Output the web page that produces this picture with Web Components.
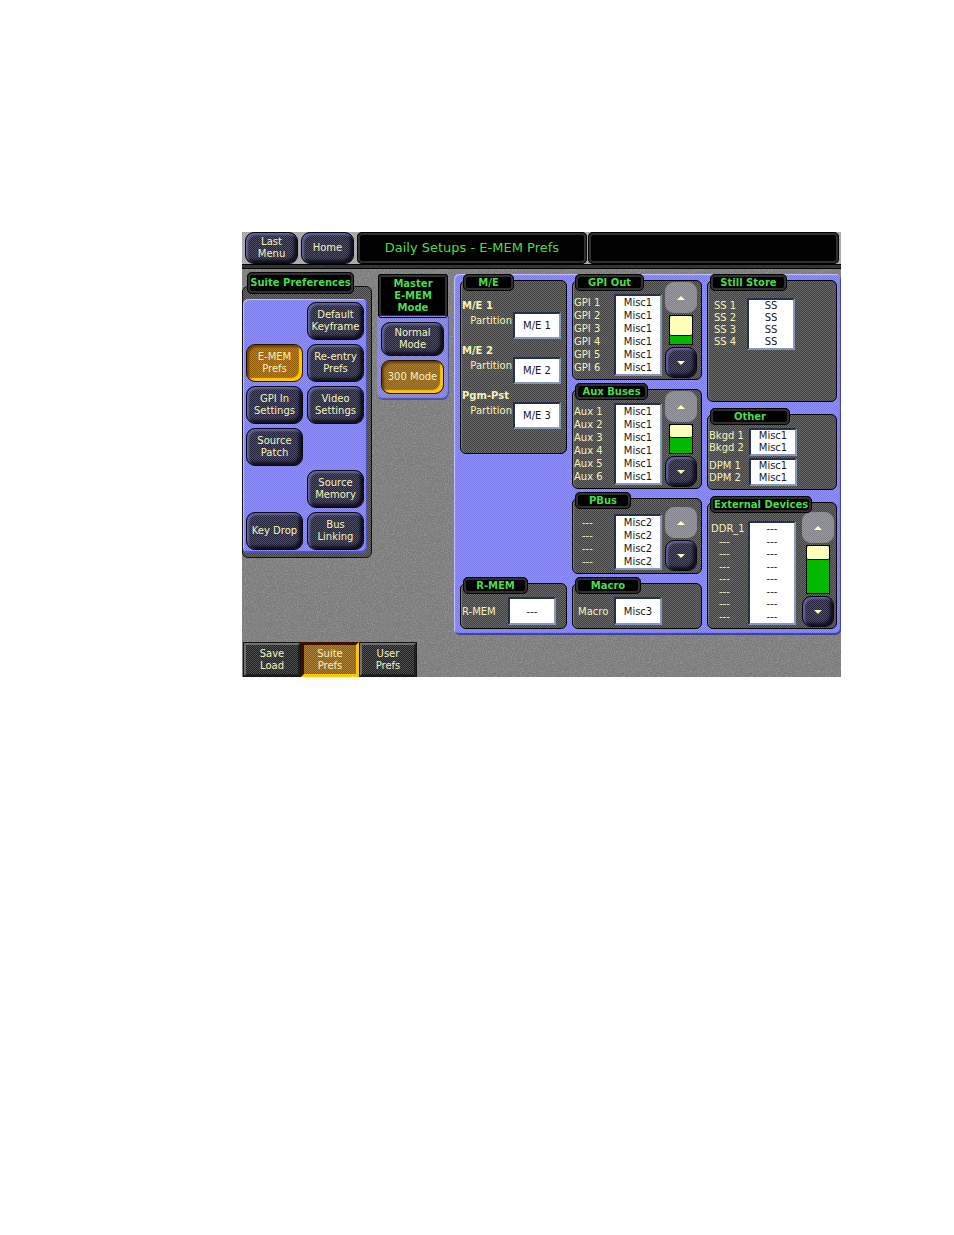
<!DOCTYPE html>
<html lang="en">
  <head>
    <meta charset="UTF-8" />
    <meta name="viewport" content="width=device-width, initial-scale=1.0" />
    <title>Daily Setups - E-MEM Prefs</title>

    <style>
      :root {
        --grain: url("data:image/svg+xml,%3Csvg xmlns='http://www.w3.org/2000/svg' width='128' height='128'%3E%3Cfilter id='n'%3E%3CfeTurbulence type='fractalNoise' baseFrequency='.9' numOctaves='2' stitchTiles='stitch'/%3E%3CfeColorMatrix values='0 0 0 0 .3 0 0 0 0 .3 0 0 0 0 .3 3 0 0 0 -1.3'/%3E%3C/filter%3E%3Crect width='128' height='128' filter='url(%23n)'/%3E%3C/svg%3E");
        --dither: repeating-conic-gradient(#ffffff38 0 25%, #0000 0 50%) 0 0 / 2px 2px;
        --blue: #7878e6;
        --grey: #404040;
        --cream: #f4f2bc;
        --green: #4bdc4b;
      }

      body {
        margin: 0;
        padding: 232px 113px 40px 242px;
        background: #fff;
        font: 10px/12px "DejaVu Sans", Verdana, sans-serif;
      }
    </style>
  </head>
  <body>
    <switcher-screen>
      <panel-button slot="header">Last<br />Menu</panel-button>
      <panel-button slot="header">Home</panel-button>
      <display-bar slot="header">Daily Setups - E-MEM Prefs</display-bar>
      <display-bar slot="header" wide></display-bar>

      <suite-panel heading="Suite Preferences">
        <panel-button style="grid-area: 1 / 2">Default<br />Keyframe</panel-button>
        <panel-button style="grid-area: 2 / 1" active>E-MEM<br />Prefs</panel-button>
        <panel-button style="grid-area: 2 / 2">Re-entry<br />Prefs</panel-button>
        <panel-button style="grid-area: 3 / 1">GPI In<br />Settings</panel-button>
        <panel-button style="grid-area: 3 / 2">Video<br />Settings</panel-button>
        <panel-button style="grid-area: 4 / 1">Source<br />Patch</panel-button>
        <panel-button style="grid-area: 5 / 2">Source<br />Memory</panel-button>
        <panel-button style="grid-area: 6 / 1">Key Drop</panel-button>
        <panel-button style="grid-area: 6 / 2">Bus<br />Linking</panel-button>
      </suite-panel>

      <mode-panel>
        <span slot="heading">Master<br />E-MEM<br />Mode</span>
        <panel-button>Normal<br />Mode</panel-button>
        <panel-button active>300 Mode</panel-button>
      </mode-panel>

      <prefs-board>
        <group-box slot="first" heading="M/E" title-width="51" class="me">
          <partition-row heading="M/E 1" value="M/E 1"></partition-row>
          <partition-row heading="M/E 2" value="M/E 2"></partition-row>
          <partition-row heading="Pgm-Pst" value="M/E 3"></partition-row>
        </group-box>
        <group-box slot="first" heading="R-MEM" title-width="65" class="rmem">
          <pad-list labels="R-MEM" values="---" single></pad-list>
        </group-box>

        <group-box slot="second" heading="GPI Out" title-width="69">
          <pad-list labels="GPI 1,GPI 2,GPI 3,GPI 4,GPI 5,GPI 6" values="Misc1,Misc1,Misc1,Misc1,Misc1,Misc1"></pad-list>
          <scroll-keys slot="side" thumb="70"></scroll-keys>
        </group-box>
        <group-box slot="second" heading="Aux Buses" title-width="73">
          <pad-list labels="Aux 1,Aux 2,Aux 3,Aux 4,Aux 5,Aux 6" values="Misc1,Misc1,Misc1,Misc1,Misc1,Misc1"></pad-list>
          <scroll-keys slot="side" thumb="45"></scroll-keys>
        </group-box>
        <group-box slot="second" heading="PBus" title-width="56" class="pbus">
          <pad-list labels="---,---,---,---" values="Misc2,Misc2,Misc2,Misc2" indent></pad-list>
          <scroll-keys slot="side"></scroll-keys>
        </group-box>
        <group-box slot="second" heading="Macro" title-width="66" class="macro">
          <pad-list labels="Macro" values="Misc3" single></pad-list>
        </group-box>

        <group-box slot="third" heading="Still Store" title-width="77" class="still">
          <pad-list labels="SS 1,SS 2,SS 3,SS 4" values="SS,SS,SS,SS" compact></pad-list>
        </group-box>
        <group-box slot="third" heading="Other" title-width="80">
          <pad-list labels="Bkgd 1,Bkgd 2" values="Misc1,Misc1" compact></pad-list>
          <pad-list labels="DPM 1,DPM 2" values="Misc1,Misc1" compact></pad-list>
        </group-box>
        <group-box slot="third" heading="External Devices" title-width="102" class="external">
          <pad-list labels="DDR_1,---,---,---,---,---,---,---" values="---,---,---,---,---,---,---,---" tall></pad-list>
          <scroll-keys slot="side" thumb="30"></scroll-keys>
        </group-box>
      </prefs-board>

      <panel-tab slot="footer">Save<br />Load</panel-tab>
      <panel-tab slot="footer" active>Suite<br />Prefs</panel-tab>
      <panel-tab slot="footer">User<br />Prefs</panel-tab>
    </switcher-screen>

    <script>
      "use strict";

      // Registers an element whose shadow markup may depend on its attributes
      function define(name, markup) {
        customElements.define(
          name,
          class extends HTMLElement {
            constructor() {
              super();
              this.attachShadow({ mode: "open" }).innerHTML = markup(this);
            }
          }
        );
      }

      const headingStyle = `
        h2 {
          box-sizing: border-box;
          margin: 0;
          border: 3px solid #303030;
          border-radius: 5px;
          outline: 1px solid #000;
          outline-offset: -1px;
          background: #000;
          color: var(--green);
          font-size: 10px;
          font-weight: bold;
          text-align: center;
          white-space: nowrap;
        }
      `;

      define("switcher-screen", () => `
        <style>
          :host {
            display: block;
            background: var(--grain), #7c7c7c;
          }
          header {
            display: flex;
            gap: 3px;
            padding: 0 2px 1px 3px;
            background: var(--dither), #a0a0a0;
            border-bottom: 3px solid #343434;
            box-shadow: 0 1px #000, inset 0 -1px #000;
          }
          header ::slotted(panel-button) {
            flex: 0 0 53px;
            --key-height: 32px;
          }
          main {
            display: flex;
            align-items: flex-start;
            gap: 5px;
            padding-top: 5px;
          }
          footer {
            display: flex;
            padding: 7px 0 0 1px;
          }
        </style>
        <header><slot name="header"></slot></header>
        <main><slot></slot></main>
        <footer><slot name="footer"></slot></footer>
      `);

      define("panel-button", el => `
        <style>
          :host {
            display: block;
          }
          button {
            display: block;
            box-sizing: border-box;
            width: 100%;
            height: var(--key-height, 38px);
            padding: 0;
            border: 1px solid #080814;
            border-radius: 9px;
            background: var(--dither), #20203a;
            box-shadow: inset 2px 2px 2px #6464a0, inset -3px -3px 3px #10101e;
            color: var(--cream);
            font: inherit;
            text-align: center;
          }
          button.active {
            border-color: #201400;
            background: var(--dither), #945c00;
            box-shadow: inset 2px 2px 2px #6c4000, inset -3px -3px 1px #ffc800;
          }
        </style>
        <button type="button" class="${el.hasAttribute("active") ? "active" : ""}"><slot></slot></button>
      `);

      define("display-bar", el => `
        <style>
          :host {
            display: block;
            box-sizing: border-box;
            flex: ${el.hasAttribute("wide") ? 252 : 230} 1 0;
            margin-left: ${el.hasAttribute("wide") ? "-2px" : "0"};
            height: 32px;
            border: 3px solid #303030;
            border-radius: 5px;
            outline: 1px solid #000;
            outline-offset: -1px;
            background: #000;
            color: var(--green);
            font-size: 13px;
            line-height: 26px;
            text-align: center;
            white-space: nowrap;
          }
        </style>
        <slot></slot>
      `);

      define("suite-panel", el => `
        <style>
          :host {
            display: block;
            flex: 0 0 130px;
            margin-top: -1px;
          }
          ${headingStyle}
          h2 {
            position: relative;
            width: 107px;
            height: 22px;
            margin-left: 5px;
            line-height: 16px;
          }
          .frame {
            margin-top: -8px;
            padding: 12px 4px 4px 0;
            border: 1px solid #101010;
            border-radius: 6px;
            background: var(--dither), var(--grey);
          }
          .keys {
            display: grid;
            grid-template-columns: 1fr 1fr;
            grid-auto-rows: 38px;
            gap: 4px;
            padding: 3px;
            border-radius: 5px;
            background: var(--dither), var(--blue);
            box-shadow: inset 1px 1px 1px #c4c4ff, inset -1px -2px 1px #5050a8;
          }
        </style>
        <h2>${el.getAttribute("heading")}</h2>
        <div class="frame"><div class="keys"><slot></slot></div></div>
      `);

      define("mode-panel", () => `
        <style>
          :host {
            display: block;
            flex: 0 0 72px;
            margin-top: 1px;
          }
          ${headingStyle}
          h2 {
            height: 44px;
            margin: 0 1px;
            border-radius: 3px;
            padding-top: 1px;
          }
          .keys {
            display: grid;
            gap: 4px;
            margin-top: -2px;
            padding: 6px 5px 6px 4px;
            border-radius: 0 0 6px 6px;
            background: var(--dither), var(--blue);
            box-shadow: inset -1px -2px 1px #5050a8;
            --key-height: 34px;
          }
        </style>
        <h2><slot name="heading"></slot></h2>
        <div class="keys"><slot></slot></div>
      `);

      define("prefs-board", () => `
        <style>
          :host {
            display: grid;
            flex: 1;
            grid-template-columns: 107fr 130fr 130fr;
            column-gap: 5px;
            margin-top: 1px;
            padding: 0 4px 6px 6px;
            border-radius: 5px;
            background: var(--dither), var(--blue);
            box-shadow: inset 1px 1px 1px #c4c4ff, inset -1px -2px 1px #404090;
          }
          div {
            display: flex;
            flex-direction: column;
            justify-content: space-between;
            gap: 3px;
            min-width: 0;
          }
          ::slotted(.me) {
            --body-height: 174px;
            --content-top: 15px;
          }
          ::slotted(.still) {
            --body-height: 122px;
            --content-top: 17px;
            --indent: 6px;
            --label-width: 33px;
          }
          ::slotted(.rmem) {
            --label-width: 46px;
          }
          ::slotted(.macro) {
            --indent: 5px;
            --label-width: 36px;
          }
          ::slotted(.pbus) {
            --content-top: 15px;
            --keys-top: 8px;
          }
          ::slotted(.external) {
            --body-height: 127px;
            --content-top: 18px;
            --keys-top: 9px;
            --keys-right: 2px;
            --indent: 3px;
            --label-width: 37px;
          }
        </style>
        <div><slot name="first"></slot></div>
        <div><slot name="second"></slot></div>
        <div><slot name="third"></slot></div>
      `);

      define("group-box", el => `
        <style>
          :host {
            display: block;
          }
          ${headingStyle}
          h2 {
            position: relative;
            width: ${el.getAttribute("title-width")}px;
            height: 17px;
            margin-left: 3px;
            line-height: 11px;
          }
          .body {
            box-sizing: border-box;
            display: flex;
            justify-content: space-between;
            min-height: var(--body-height, 0);
            margin-top: -11px;
            border: 1px solid #000;
            border-radius: 6px;
            background: var(--dither), var(--grey);
            box-shadow: inset 1px 0 #787878;
          }
          .content {
            display: grid;
            align-content: start;
            gap: 2px;
            padding: var(--content-top, 13px) 0 3px var(--indent, 1px);
          }
        </style>
        <h2>${el.getAttribute("heading")}</h2>
        <div class="body">
          <div class="content"><slot></slot></div>
          <slot name="side"></slot>
        </div>
      `);

      const padStyle = `
        button {
          display: grid;
          box-sizing: border-box;
          align-content: space-around;
          width: 48px;
          padding: 0;
          border: 2px solid #26304c;
          border-right-color: #8898b8;
          border-bottom-color: #8898b8;
          border-radius: 0;
          background: #fff;
          color: #181818;
          font: inherit;
          text-align: center;
        }
      `;

      define("partition-row", el => `
        <style>
          :host {
            display: grid;
            grid-template-columns: 50px auto;
            align-items: start;
            padding-top: 4px;
            color: var(--cream);
          }
          b {
            grid-column: 1 / 3;
          }
          label {
            padding-top: 3px;
            text-align: right;
          }
          ${padStyle}
          button {
            height: 27px;
            margin-left: 1px;
          }
        </style>
        <b>${el.getAttribute("heading")}</b>
        <label for="pad">Partition</label>
        <button id="pad" type="button">${el.getAttribute("value")}</button>
      `);

      define("pad-list", el => {
        const labels = el.getAttribute("labels").split(",");
        const values = el.getAttribute("values").split(",");
        return `
          <style>
            :host {
              --row: 13px;
              display: grid;
              grid-template-columns: var(--label-width, 40px) auto;
              color: var(--cream);
            }
            :host([compact]),
            :host([tall]) {
              --row: 12px;
            }
            label {
              display: grid;
              align-content: space-around;
              padding: 2px 0;
              white-space: nowrap;
            }
            :host([indent]) label,
            :host([tall]) label span:not(:first-child) {
              padding-left: 8px;
            }
            span {
              line-height: var(--row);
            }
            ${padStyle}
            :host([tall]) button {
              min-height: 104px;
            }
            :host([single]) button {
              height: 28px;
            }
          </style>
          <label for="pad">${labels.map(text => `<span>${text}</span>`).join("")}</label>
          <button id="pad" type="button">${values.map(text => `<span>${text}</span>`).join("")}</button>
        `;
      });

      define("scroll-keys", el => `
        <style>
          :host {
            display: flex;
            flex: 0 0 32px;
            flex-direction: column;
            align-items: stretch;
            gap: 2px;
            margin: var(--keys-top, 1px) var(--keys-right, 4px) 1px 0;
          }
          button {
            display: grid;
            place-items: center;
            height: 31px;
            padding: 0;
            border: 1px solid #080814;
            border-radius: 9px;
            background: var(--dither), #20203a;
            box-shadow: inset 2px 2px 2px #6464a0, inset -3px -3px 3px #10101e;
          }
          button:disabled {
            border-color: #8c8c8c;
            background: var(--dither), #808088;
            box-shadow: none;
          }
          .track {
            flex: 1;
            margin: 0 4px;
            border: 1px solid #000;
            background: #00b800;
          }
          .thumb {
            box-sizing: border-box;
            height: ${el.getAttribute("thumb")}%;
            border-bottom: 1px solid #000;
            border-radius: 2px;
            background: #ffffb8;
          }
        </style>
        <button type="button" aria-label="Scroll up" disabled>
          <svg width="8" height="4"><path d="M0 4 4 0l4 4z" fill="#ffffc0" /></svg>
        </button>
        ${el.hasAttribute("thumb") ? `<div class="track"><div class="thumb"></div></div>` : ""}
        <button type="button" aria-label="Scroll down">
          <svg width="8" height="4"><path d="M0 0h8L4 4z" fill="#ffffc0" /></svg>
        </button>
      `);

      define("panel-tab", el => `
        <style>
          :host {
            display: block;
            flex: 0 0 58px;
          }
          button {
            display: block;
            box-sizing: border-box;
            width: 100%;
            height: 35px;
            padding: 0;
            border: 3px solid;
            border-color: #707070 #202020 #202020 #707070;
            outline: 1px solid #141414;
            outline-offset: -1px;
            background: var(--dither), #202020;
            color: var(--cream);
            font: inherit;
          }
          button.active {
            border-color: #3c1000 #ffc800 #ffc800 #3c1000;
            outline: none;
            background: var(--dither), #945c00;
          }
        </style>
        <button type="button" class="${el.hasAttribute("active") ? "active" : ""}"><slot></slot></button>
      `);
    </script>
  </body>
</html>
